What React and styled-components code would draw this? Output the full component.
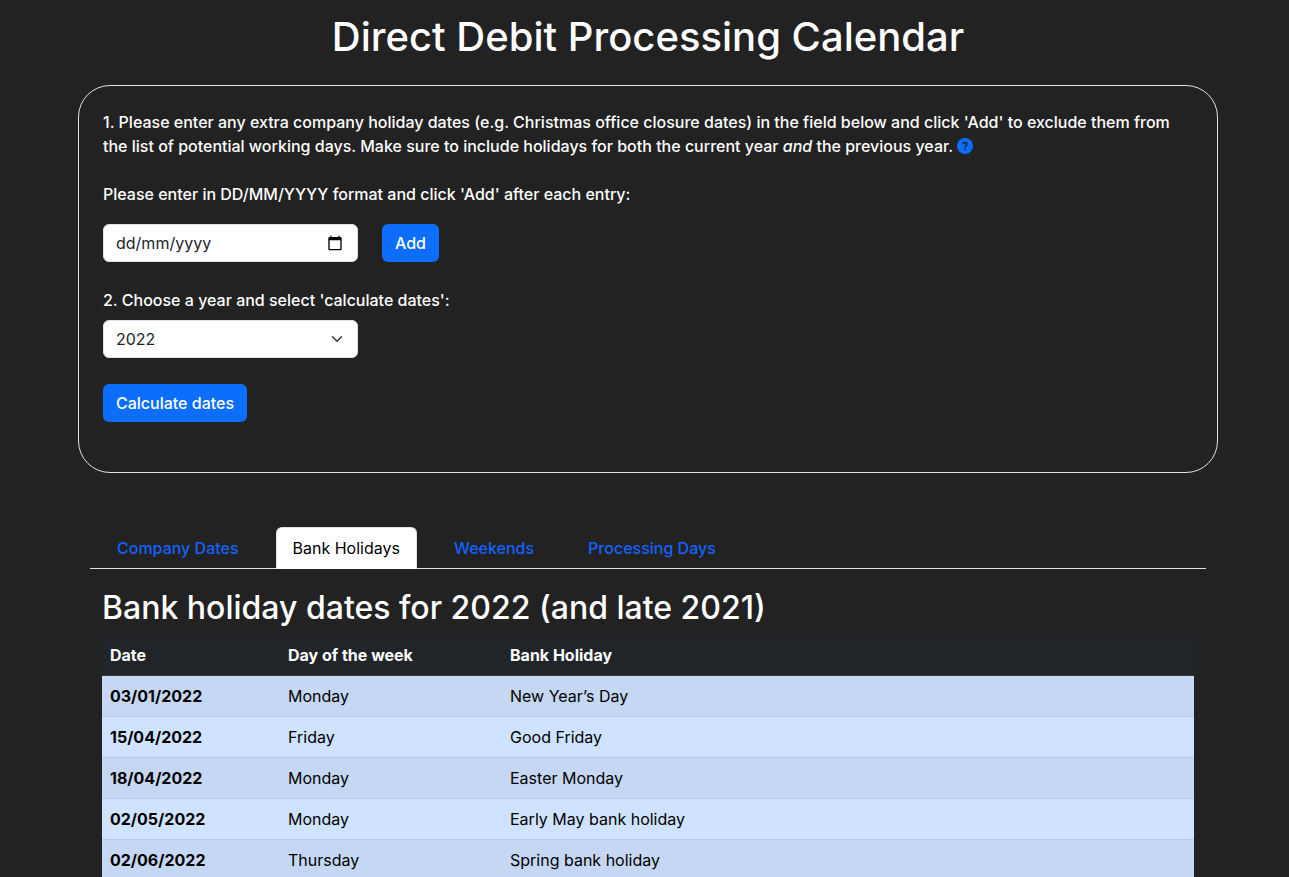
import React, { useState } from "react";
import styled, { createGlobalStyle } from "styled-components";

const GlobalStyle = createGlobalStyle`
  *, *::before, *::after { box-sizing: border-box; }
  html { scrollbar-width: none; }
  body {
    margin: 0;
    padding-left: 7px;
    background: #222;
    color: #fff;
    font-family: Inter, "Liberation Sans", sans-serif;
    font-size: 16px;
    line-height: 24px;
  }
`;

const Container = styled.main`
  max-width: 1140px;
  margin: 0 auto;
  padding-top: 13px;
`;

const Title = styled.h1`
  margin: 0 0 24px;
  font-size: 40px;
  font-weight: 500;
  line-height: 48px;
  text-align: center;
`;

const Panel = styled.form`
  border: 1px solid #dee2e6;
  border-radius: 32px;
  padding: 24px 24px 50px;
  margin-bottom: 54px;
`;

const Text = styled.p`
  margin: 0 0 24px;
  font-weight: 500;
`;

const Help = styled.button`
  width: 16px;
  height: 16px;
  padding: 0;
  border: 0;
  background: none;
  color: #0d6efd;
  vertical-align: -2px;
  svg { display: block; }
`;

const Label = styled.label`
  display: block;
  margin-bottom: ${(p) => p.$gap}px;
  font-weight: 500;
`;

const Row = styled.div`
  display: flex;
  gap: 24px;
  margin-bottom: 26px;
`;

const Field = styled.div`
  display: flex;
  align-items: center;
  width: 255px;
  height: 38px;
  padding: 0 ${(p) => p.$end || 12}px 0 12px;
  border: 1px solid #dee2e6;
  border-radius: 6px;
  background: #fff;
  color: #212529;
`;

const DateInput = styled.input`
  flex: 1;
  min-width: 0;
  padding: 0;
  border: 0;
  outline: 0;
  background: none;
  color: inherit;
  font: inherit;
  &::placeholder { color: #212529; opacity: 1; }
`;

const Select = styled.select`
  flex: 1;
  appearance: none;
  padding: 0;
  border: 0;
  outline: 0;
  background: none;
  color: inherit;
  font: inherit;
`;

const Button = styled.button`
  height: 38px;
  padding: 0 13px;
  border: 0;
  border-radius: 6px;
  background: #0d6efd;
  color: #fff;
  font: inherit;
  font-weight: 500;
`;

const Results = styled.section`
  margin: 0 12px;
`;

const Tabs = styled.nav`
  display: flex;
  gap: 20px;
  padding-left: 10px;
  border-bottom: 1px solid #dee2e6;
`;

const Tab = styled.a`
  padding: 8px 16px 9px;
  margin-bottom: -1px;
  border: 1px solid ${(p) => (p.$active ? "#dee2e6" : "transparent")};
  border-bottom: 0;
  border-radius: 6px 6px 0 0;
  background: ${(p) => (p.$active ? "#fff" : "transparent")};
  color: ${(p) => (p.$active ? "#000" : "#1462ff")};
  font-weight: ${(p) => (p.$active ? 400 : 500)};
  text-decoration: none;
`;

const TabPanel = styled.div`
  padding: 19px 12px 0;
`;

const Heading = styled.h2`
  margin: 0 0 8px;
  font-size: 32px;
  font-weight: 500;
  line-height: 39px;
`;

const Table = styled.table`
  width: 100%;
  border-collapse: collapse;
  table-layout: fixed;
  color: #000;
  text-align: left;
`;

const HeadCell = styled.th`
  width: ${(p) => p.$width || "auto"};
  padding: 8px;
  border-bottom: 1px solid #373b3e;
  background: #212529;
  color: #fff;
  font-weight: 700;
`;

const BodyRow = styled.tr`
  background: #cfe2ff;
  border-bottom: 1px solid #bacbe6;
  &:nth-child(odd) { background: #c5d7f2; }
  th, td { padding: 8px; }
`;

const holidays = [
  ["03/01/2022", "Monday", "New Year’s Day"],
  ["15/04/2022", "Friday", "Good Friday"],
  ["18/04/2022", "Monday", "Easter Monday"],
  ["02/05/2022", "Monday", "Early May bank holiday"],
  ["02/06/2022", "Thursday", "Spring bank holiday"],
];
const tabs = ["Company Dates", "Bank Holidays", "Weekends", "Processing Days"];

const HelpIcon = () => (
  <svg width="16" height="16" viewBox="0 0 16 16" aria-hidden="true">
    <circle cx="8" cy="8" r="8" fill="currentColor" />
    <path d="M5.900 6.200C6 5 6.700 4.500 7.900 4.500c1.300 0 2.100.7 2.100 1.700 0 1.500-2 1.500-2 3" fill="none" stroke="#222" strokeWidth="1.400" />
    <circle cx="8" cy="11.200" r=".9" fill="#222" />
  </svg>
);

const CalendarIcon = () => (
  <svg width="16" height="16" viewBox="0 0 24 24" aria-hidden="true">
    <path fill="#000" d="M20 3h-1V1h-2v2H7V1H5v2H4c-1.100 0-2 .9-2 2v16c0 1.100.9 2 2 2h16c1.100 0 2-.9 2-2V5c0-1.100-.9-2-2-2zm0 18H4V8h16v13z" />
  </svg>
);

const Chevron = () => (
  <svg width="16" height="12" viewBox="0 0 16 16" aria-hidden="true">
    <path d="m2 5 6 6 6-6" fill="none" stroke="#343a40" strokeWidth="2" strokeLinecap="round" strokeLinejoin="round" />
  </svg>
);

export default function App() {
  const [year, setYear] = useState("2022");
  return (
    <>
      <GlobalStyle />
      <Container>
        <Title>Direct Debit Processing Calendar</Title>
        <Panel onSubmit={(e) => e.preventDefault()}>
          <Text>
            1. Please enter any extra company holiday dates (e.g. Christmas office closure dates) in the field below and
            click 'Add' to exclude them from the list of potential working days. Make sure to include holidays for both
            the current year <em>and</em> the previous year.{" "}
            <Help type="button" aria-label="Help"><HelpIcon /></Help>
          </Text>
          <Label htmlFor="holiday" $gap={18}>Please enter in DD/MM/YYYY format and click 'Add' after each entry:</Label>
          <Row>
            <Field $end={14}>
              <DateInput id="holiday" placeholder="dd/mm/yyyy" />
              <CalendarIcon />
            </Field>
            <Button type="button">Add</Button>
          </Row>
          <Label htmlFor="year" $gap={8}>2. Choose a year and select 'calculate dates':</Label>
          <Row>
            <Field>
              <Select id="year" value={year} onChange={(e) => setYear(e.target.value)}>
                <option>2021</option>
                <option>2022</option>
                <option>2023</option>
              </Select>
              <Chevron />
            </Field>
          </Row>
          <Button type="submit">Calculate dates</Button>
        </Panel>
        <Results>
          <Tabs>
            {tabs.map((name) => (
              <Tab key={name} href="#" $active={name === "Bank Holidays"}>{name}</Tab>
            ))}
          </Tabs>
          <TabPanel>
            <Heading>Bank holiday dates for 2022 (and late 2021)</Heading>
            <Table>
              <thead>
                <tr>
                  <HeadCell $width="178px">Date</HeadCell>
                  <HeadCell $width="222px">Day of the week</HeadCell>
                  <HeadCell>Bank Holiday</HeadCell>
                </tr>
              </thead>
              <tbody>
                {holidays.map(([date, day, name]) => (
                  <BodyRow key={date}>
                    <th scope="row">{date}</th>
                    <td>{day}</td>
                    <td>{name}</td>
                  </BodyRow>
                ))}
              </tbody>
            </Table>
          </TabPanel>
        </Results>
      </Container>
    </>
  );
}
